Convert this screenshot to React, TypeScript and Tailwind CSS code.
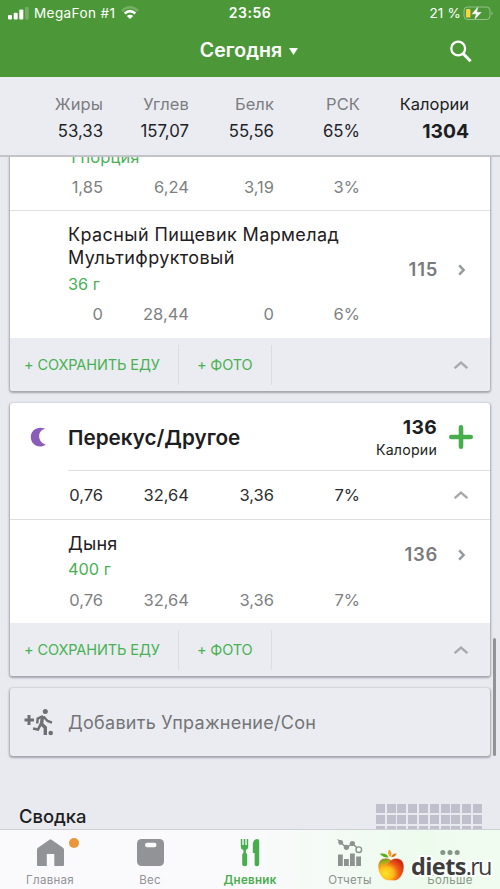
import React from "react";

const totals = [
  { label: "Жиры", value: "53,33" },
  { label: "Углев", value: "157,07" },
  { label: "Белк", value: "55,56" },
  { label: "РСК", value: "65%" },
];

function Nutrients({ values, className }: { values: string[]; className: string }) {
  return (
    <div className={`grid grid-cols-[93px_86px_85px_86px] text-right text-[16.5px] leading-5 ${className}`}>
      {values.map((v, i) => (
        <span key={i}>{v}</span>
      ))}
    </div>
  );
}

function ChevronUp() {
  return (
    <svg className="h-2 w-4" viewBox="0 0 16 8" fill="none" stroke="#a9aaae" strokeWidth="2.4">
      <path d="M1.6 7.2 8 1.6l6.4 5.6" />
    </svg>
  );
}

function ChevronRight() {
  return (
    <svg className="h-3 w-2" viewBox="0 0 8 12" fill="none" stroke="#98999d" strokeWidth="2.5">
      <path d="M1.2 1.3 5.6 6l-4.4 4.7" />
    </svg>
  );
}

function CardFooter() {
  return (
    <div className="flex h-[53px] items-center bg-[#ebecf1] pr-[21px] text-[14.5px] leading-5 text-[#48b154]">
      <div className="flex h-10 w-[169px] items-center whitespace-nowrap border-r border-[#dcdde2] pl-[14px] tracking-[-0.1px]">
        + СОХРАНИТЬ ЕДУ
      </div>
      <div className="flex h-10 w-[93px] items-center whitespace-nowrap border-r border-[#dcdde2] pl-[18px] tracking-[-0.15px]">
        + ФОТО
      </div>
      <div className="ml-auto">
        <ChevronUp />
      </div>
    </div>
  );
}

const cardStyle =
  "mx-[10px] shrink-0 overflow-hidden rounded-[3px] shadow-[0_1px_2px_1px_rgba(70,72,80,0.42)]";

function StatusBar() {
  return (
    <div className="grid h-[26px] grid-cols-[1fr_auto_1fr] items-center px-2 text-[13.5px] leading-[26px]">
      <div className="flex items-center">
        <svg className="h-[13px] w-[21px]" viewBox="0 0 21 13" fill="#fff">
          <rect x="0" y="8" width="4" height="4.5" rx="1" />
          <rect x="5.7" y="5.7" width="4" height="6.8" rx="1" />
          <rect x="11.3" y="2.5" width="4" height="10" rx="1" />
          <rect x="17" y="0" width="3.7" height="12.5" rx="1" opacity=".22" />
        </svg>
        <span className="ml-[5px] tracking-[0.42px]">MegaFon #1</span>
        <svg className="ml-[6px] h-[14px] w-[18px]" viewBox="0 0 18 14" fill="none" stroke="#fff">
          <path d="M1 5Q9-2.4 17 5" strokeWidth="2.4" opacity=".22" />
          <path d="M3.7 7.5Q9 2.8 14.3 7.5" strokeWidth="2.5" />
          <path d="M9 13 5.8 9.9Q9 7.7 12.2 9.9Z" fill="#fff" stroke="none" />
        </svg>
      </div>
      <span className="text-[14px] font-semibold tracking-[0.55px]">23:56</span>
      <div className="flex items-center justify-end">
        <span className="tracking-[0.2px]">21 %</span>
        <svg className="ml-[2px] -mr-[2px] h-[16px] w-[31px]" viewBox="0 0 31 16">
          <rect x="1" y="2" width="26" height="12.5" rx="3.5" fill="none" stroke="#fff" opacity=".4" />
          <path d="M28.5 6.2q2.4 2 0 4Z" fill="#fff" opacity=".4" />
          <rect x="3" y="4" width="4.4" height="8.6" rx="1.2" fill="#fed43e" />
          <path d="M15.5.8 8.3 9.200h4.500l-1.800 6.300L19 7h-4.800Z" fill="#fff" stroke="#4c9838" strokeWidth=".4" />
        </svg>
      </div>
    </div>
  );
}

function Header() {
  return (
    <header className="h-[77px] shrink-0 bg-[#4c9838] text-white">
      <StatusBar />
      <div className="grid h-[50px] grid-cols-[1fr_auto_1fr] items-center">
        <span />
        <div className="-ml-[2px] flex items-center gap-[7px] text-[19.5px] font-semibold">
          <span className="tracking-[0.1px]">Сегодня</span>
          <svg className="h-[7px] w-[9px]" viewBox="0 0 9 7" fill="#fff">
            <path d="M0 0h9L4.5 7Z" />
          </svg>
        </div>
        <svg className="mr-[28px] h-[23px] w-[23px] justify-self-end" viewBox="0 0 23 23" fill="none" stroke="#fff" strokeWidth="2.3">
          <circle cx="9.2" cy="8.5" r="6.9" />
          <path d="m13.8 13.3 7.8 8" strokeWidth="3" />
        </svg>
      </div>
    </header>
  );
}

function Totals() {
  return (
    <section className="grid h-[80px] shrink-0 grid-cols-[103px_86px_85px_86px_109px] border-b-2 border-[#c3c4c9] bg-[#ebecf1] pt-[15px] text-right">
      {totals.map((t) => (
        <div key={t.label} className="flex flex-col">
          <span className="text-[16.5px] leading-6 tracking-[0.1px] text-[#7c7d81]">{t.label}</span>
          <span className="mt-[3px] text-[16.8px] leading-6 text-[#222327]">{t.value}</span>
        </div>
      ))}
      <div className="flex flex-col text-[#1d1e21]">
        <span className="text-[16.5px] leading-6">Калории</span>
        <span className="mt-[3px] text-[19.3px] font-bold leading-6">1304</span>
      </div>
    </section>
  );
}

function Kcal({ value }: { value: string }) {
  return (
    <div className="flex items-center pr-[24px]">
      <span className="mr-[20px] text-[18.5px] font-semibold tracking-[0.7px] text-[#7a7b7e]">{value}</span>
      <ChevronRight />
    </div>
  );
}

function TabLabel({ children, className }: { children: React.ReactNode; className: string }) {
  return <span className={`text-[11.5px] leading-4 tracking-[0.3px] ${className}`}>{children}</span>;
}

function TabBar() {
  return (
    <nav className="relative grid h-[60px] shrink-0 grid-cols-5 border-t border-[#cfd0d5] bg-[linear-gradient(90deg,#fafafc_0%,#fafafc_50%,#edfbed_85%,#f1fcf1_100%)] text-[#929396]">
      <div className="flex flex-col items-center pt-[9px]">
        <div className="relative">
          <svg className="h-[27px] w-[27px]" viewBox="0 0 27 27" fill="#929396">
            <path d="M12.5.7q1-.7 2 0L26 8.7q1 .8 1 2V26q0 1-1 1h-8.7V15H9.8v12H1q-1 0-1-1V10.7q0-1.2 1-2Z" />
          </svg>
          <span className="absolute -top-[1px] left-[32.5px] h-[10px] w-[10px] rounded-full bg-[#ea9539]" />
        </div>
        <TabLabel className="mt-[6px]">Главная</TabLabel>
      </div>
      <div className="flex flex-col items-center pt-[9px]">
        <svg className="h-[27px] w-[27px]" viewBox="0 0 27 27">
          <rect width="27" height="27" rx="4.5" fill="#929396" />
          <rect x="8" y="3.8" width="11.5" height="4.4" rx="2.2" fill="#fafafc" />
        </svg>
        <TabLabel className="mt-[6px]">Вес</TabLabel>
      </div>
      <div className="flex flex-col items-center pt-[9px] text-[#48ad4c]">
        <svg className="h-[28px] w-[20px]" viewBox="0 0 20 28" fill="#48ad4c">
          <path d="M.8 0h1.500v6h1.400V0h1.600v6h1.400V0h1.500v7.500q0 3-2.300 3.500v3q1.300.5 1.300 2v9.300q0 2-2.500 2t-2.500-2V16q0-1.500 1.200-2v-3Q.8 10.500.8 7.500Z" />
          <path d="M12.800 5Q13.500.3 17 0q2.200 0 2.200 2v23.300q0 2-2.300 2t-2.300-2V14h-1.800Z" />
        </svg>
        <TabLabel className="mt-[5px] font-semibold">Дневник</TabLabel>
      </div>
      <div className="flex flex-col items-center pt-[9px] text-[#8b928d]">
        <svg className="h-[28px] w-[26px]" viewBox="0 0 26 28" fill="#8d938f">
          <path d="m2 2 2.500 2 5 5 5.700-4.800 6.300 6" fill="none" stroke="#8d938f" strokeWidth="1.5" />
          <path d="m0 0 4 1.500-1 3Z" />
          <circle cx="3.7" cy="3.5" r="2.4" />
          <circle cx="9.4" cy="8.3" r="2.6" />
          <circle cx="15.4" cy="4.5" r="2.6" />
          <circle cx="21.8" cy="10.7" r="2.8" fill="#f7fbf8" stroke="#8d938f" strokeWidth="1.4" />
          <path d="M1 15.500h4.800V27H1ZM7 20h4.800v7H7ZM13 14.500h4.800V27H13ZM19.200 17.500H24V27h-4.800Z" />
        </svg>
        <TabLabel className="mt-[5px]">Отчеты</TabLabel>
      </div>
      <div className="flex flex-col items-center pt-[20px] text-[#87998a]">
        <svg className="h-[5px] w-[20px]" viewBox="0 0 20 5" fill="#849487">
          <circle cx="2.8" cy="2.5" r="2.5" />
          <circle cx="10" cy="2.5" r="2.5" />
          <circle cx="17.2" cy="2.5" r="2.5" />
        </svg>
        <TabLabel className="mt-[17px]">Больше</TabLabel>
      </div>
      <Watermark />
    </nav>
  );
}

function Watermark() {
  return (
    <div className="absolute left-[377px] top-[19px] flex items-start">
      <svg className="h-[34px] w-[28px]" viewBox="0 0 28 34">
        <defs>
          <radialGradient id="apple" cx="30%" cy="68%" r="76%">
            <stop offset="0" stopColor="#ffe32c" />
            <stop offset=".38" stopColor="#ffbd16" />
            <stop offset=".66" stopColor="#ef5e18" />
            <stop offset="1" stopColor="#cf2912" />
          </radialGradient>
          <linearGradient id="blush" x1="0" y1="0" x2="0.25" y2="1">
            <stop offset="0" stopColor="#4eab19" />
            <stop offset=".55" stopColor="#a9bd1b" stopOpacity=".8" />
            <stop offset="1" stopColor="#ffe32c" stopOpacity="0" />
          </linearGradient>
        </defs>
        <path d="M14 11C18 8 26.8 8.5 27 17.5c.1 7.500-4.500 13.500-9 14.300-1.600.2-2.600-.4-4-.3-2 .5-6.300.5-10-4.200C-.5 21 0 11 6.500 9.500c3-.7 5.500 0 7.500 1.500Z" fill="url(#apple)" stroke="#fff" strokeWidth=".6" />
        <path d="M13.800 11.500C8 7.500 1.500 10.500 1 19c3-.5 9.500-2.500 12.800-7.500Z" fill="url(#blush)" />
        <path d="M11.500 8.500C8 9 5 7.300 2.700 4.800 6.500 4 10.500 4.500 11.500 8.500Z" fill="#58ae18" />
        <path d="M13.200 8C10.300 5.300 10.800 2.300 12.300.5c2.700 2.500 3 5 .9 7.500Z" fill="#f6a21a" />
        <path d="M14.200 8.300c.5-2.600 2.300-4 5.500-3.800-.8 2.300-2.500 3.500-5.500 3.800Z" fill="#e6731a" />
      </svg>
      <div className="ml-[6px] mt-[2px] whitespace-nowrap font-['Open_Sans',sans-serif] text-[23.5px] leading-[30px] text-[#3d3d3d] [paint-order:stroke_fill] [-webkit-text-stroke:4px_white]">
        <span className="font-bold tracking-[-0.6px]">diets</span>
        <span className="tracking-[-1.8px]">.ru</span>
      </div>
    </div>
  );
}

export default function App() {
  return (
    <div className="relative flex h-[889px] w-[500px] flex-col overflow-hidden bg-[#e9eaf0] font-['Inter','Liberation_Sans',sans-serif]">
      <Header />
      <Totals />
      <main className="flex min-h-0 flex-1 flex-col overflow-hidden">
        <article className={`${cardStyle} -mt-[10px] mb-[12px] bg-white`}>
          <div className="h-[64px] border-b border-[#dedfe2]">
            <p className="pl-[59px] text-[16.5px] leading-5 tracking-[0.1px] text-[#48b154]">1 порция</p>
            <Nutrients values={["1,85", "6,24", "3,19", "3%"]} className="mt-[10px] text-[#7e7f82]" />
          </div>
          <div className="flex h-[127px] justify-between">
            <div className="pt-[12px]">
              <h3 className="whitespace-nowrap pl-[58px] text-[18px] leading-[23px] tracking-[0.39px] text-[#1f2023]">
                Красный Пищевик Мармелад
                <br />
                Мультифруктовый
              </h3>
              <p className="mt-[5px] pl-[58px] text-[16.3px] leading-5 text-[#48b154]">36 г</p>
              <Nutrients values={["0", "28,44", "0", "6%"]} className="mt-[10px] text-[#7e7f82]" />
            </div>
            <div className="flex pb-[10px]">
              <Kcal value="115" />
            </div>
          </div>
          <CardFooter />
        </article>

        <article className={`${cardStyle} mb-[12px] bg-white`}>
          <div className="flex h-[67px] items-center">
            <svg className="ml-[20px] h-[20px] w-[17px]" viewBox="0 0 17 20" fill="#8c5cbb">
              <path d="M15.2 1.8C7.5 3.5 6.500 14.500 15.800 17.800 8.500 22.300.8 17.500.8 10S8.500-1.500 15.200 1.800Z" />
            </svg>
            <h2 className="ml-[21px] mt-[2px] text-[20.7px] font-semibold text-[#1d1e21]">Перекус/Другое</h2>
            <div className="ml-auto mt-[2px] flex flex-col text-right text-[#1d1e21]">
              <span className="mt-px text-[19.3px] font-bold leading-6 tracking-[0.3px]">136</span>
              <span className="text-[14.2px] leading-[22px] tracking-[0.2px]">Калории</span>
            </div>
            <svg className="ml-[12px] mr-[17px] h-6 w-6" viewBox="0 0 24 24" stroke="#48ad4c" strokeWidth="4.6" strokeLinecap="round">
              <path d="M12 2.300v19.400M2.300 12h19.400" />
            </svg>
          </div>
          <div className="ml-[58px] h-px bg-[#dedfe2]" />
          <div className="flex h-[49px] items-center justify-between border-b border-[#dedfe2] pr-[21px]">
            <Nutrients values={["0,76", "32,64", "3,36", "7%"]} className="text-[#2b2c2f]" />
            <ChevronUp />
          </div>
          <div className="flex h-[103px] justify-between">
            <div className="pt-[12px]">
              <h3 className="pl-[58px] text-[18px] leading-[23px] tracking-[0.2px] text-[#1f2023]">Дыня</h3>
              <p className="mt-[4px] pl-[58px] text-[16.3px] leading-5 text-[#48b154]">400 г</p>
              <Nutrients values={["0,76", "32,64", "3,36", "7%"]} className="mt-[11px] text-[#7e7f82]" />
            </div>
            <div className="flex pb-[33px]">
              <Kcal value="136" />
            </div>
          </div>
          <CardFooter />
        </article>

        <article className={`${cardStyle} flex h-[68px] items-center bg-[#ebecf1] pl-[14px]`}>
          <svg className="h-[28px] w-[30px]" viewBox="0 0 30 28" fill="none" stroke="#6f7073" strokeWidth="3">
            <path d="M.5 12H10M5 7v10" />
            <circle cx="21.3" cy="3.5" r="2.5" fill="#6f7073" stroke="none" />
            <path d="M18.500 8.500 17.500 16l3.800 3.500V27" strokeWidth="3.4" />
            <path d="m19.500 8.500 4 4.500 4.500 1.700M19 8.200l-5.300 2.300-.5 5" strokeWidth="2.5" />
            <path d="m16.800 16-2.800 5.500-5-1" strokeWidth="2.6" />
            <circle cx="26.7" cy="25" r="2.3" fill="#6f7073" stroke="none" />
          </svg>
          <span className="ml-[14px] text-[18px] tracking-[0.27px] text-[#747578]">Добавить Упражнение/Сон</span>
        </article>

        <section className="flex shrink-0 justify-between pl-[19px] pr-[18px] pt-[48px]">
          <h2 className="text-[18.4px] font-medium leading-6 text-[#1d1e21]">Сводка</h2>
          <div className="grid grid-cols-[repeat(10,9px)] gap-x-[1.8px] gap-y-[2px]">
            {Array.from({ length: 30 }, (_, i) => (
              <span key={i} className="h-[9px] w-[9px] bg-[#bfc0cb]" />
            ))}
          </div>
        </section>
      </main>
      <TabBar />
      <div className="absolute left-[493px] top-[638px] h-[118px] w-[3px] rounded-full bg-[#929397]" />
    </div>
  );
}
